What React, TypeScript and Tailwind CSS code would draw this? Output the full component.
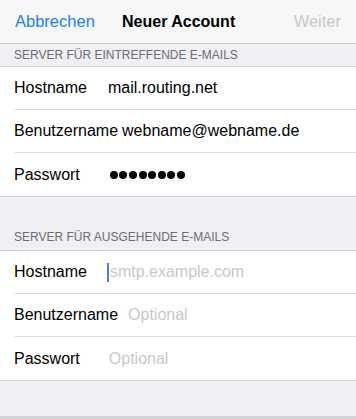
import React from 'react'

const font = { fontFamily: '"Liberation Sans", Arial, sans-serif' }

interface RowProps {
  label: string
  value?: string
  placeholder?: string
  password?: boolean
  caret?: boolean
  gap: string
  last?: boolean
}

const Row: React.FC<RowProps> = ({ label, value, placeholder, password, caret, gap, last }) => (
  <div className="pl-[14px] bg-white">
    <div className={`h-[43px] flex items-center pr-4 ${last ? '' : 'border-b border-[#e0e0e4]'}`}>
      <span className="text-[16px] text-black shrink-0">{label}</span>
      <div className={`flex items-center ${gap}`}>
        {password ? (
          <div className="flex items-center gap-[1.6px]">
            {Array.from({ length: 8 }).map((_, i) => (
              <span key={i} className="w-[8px] h-[8px] rounded-full bg-black" />
            ))}
          </div>
        ) : value ? (
          <span className="text-[16px] text-black">{value}</span>
        ) : (
          <>
            {caret && <span className="w-[2px] h-[19px] bg-[#4a7cf7] mr-[1px]" />}
            <span className="text-[16px] text-[#c7c7cd]">{placeholder}</span>
          </>
        )}
      </div>
    </div>
  </div>
)

export default function App() {
  return (
    <div className="w-[356px] h-[419px] bg-[#efeff4] flex flex-col overflow-hidden" style={font}>
      {/* Navigationsleiste */}
      <div className="h-[44px] shrink-0 bg-[#f7f7f8] border-b border-[#c8c7cc] flex items-center px-[15px]">
        <span className="text-[16.5px] text-[#1a82fb] w-[107px]">Abbrechen</span>
        <span className="text-[16px] font-bold text-black flex-1">Neuer Account</span>
        <span className="text-[16.5px] text-[#c8c8c8]">Weiter</span>
      </div>

      <div className="h-[23px] shrink-0 flex items-center px-[14px] border-b border-[#d8d8dc]">
        <span className="text-[12px] text-[#6d6d72]">SERVER FÜR EINTREFFENDE E-MAILS</span>
      </div>
      <div className="border-b border-[#d0d0d4]">
        <Row label="Hostname" value="mail.routing.net" gap="ml-[21px]" />
        <Row label="Benutzername" value="webname@webname.de" gap="ml-[4px]" />
        <Row label="Passwort" password gap="ml-[30px]" last />
      </div>

      <div className="h-[54px] shrink-0 flex items-end pb-[4px] px-[14px] border-b border-[#d0d0d4]">
        <span className="text-[12px] text-[#6d6d72]">SERVER FÜR AUSGEHENDE E-MAILS</span>
      </div>
      <div className="border-b border-[#d0d0d4]">
        <Row label="Hostname" placeholder="smtp.example.com" caret gap="ml-[20px]" />
        <Row label="Benutzername" placeholder="Optional" gap="ml-[10px]" />
        <Row label="Passwort" placeholder="Optional" gap="ml-[29px]" last />
      </div>

      <div className="flex-1" />
      <div className="h-[3px] shrink-0 bg-[#d2d3d8]" />
    </div>
  )
}
